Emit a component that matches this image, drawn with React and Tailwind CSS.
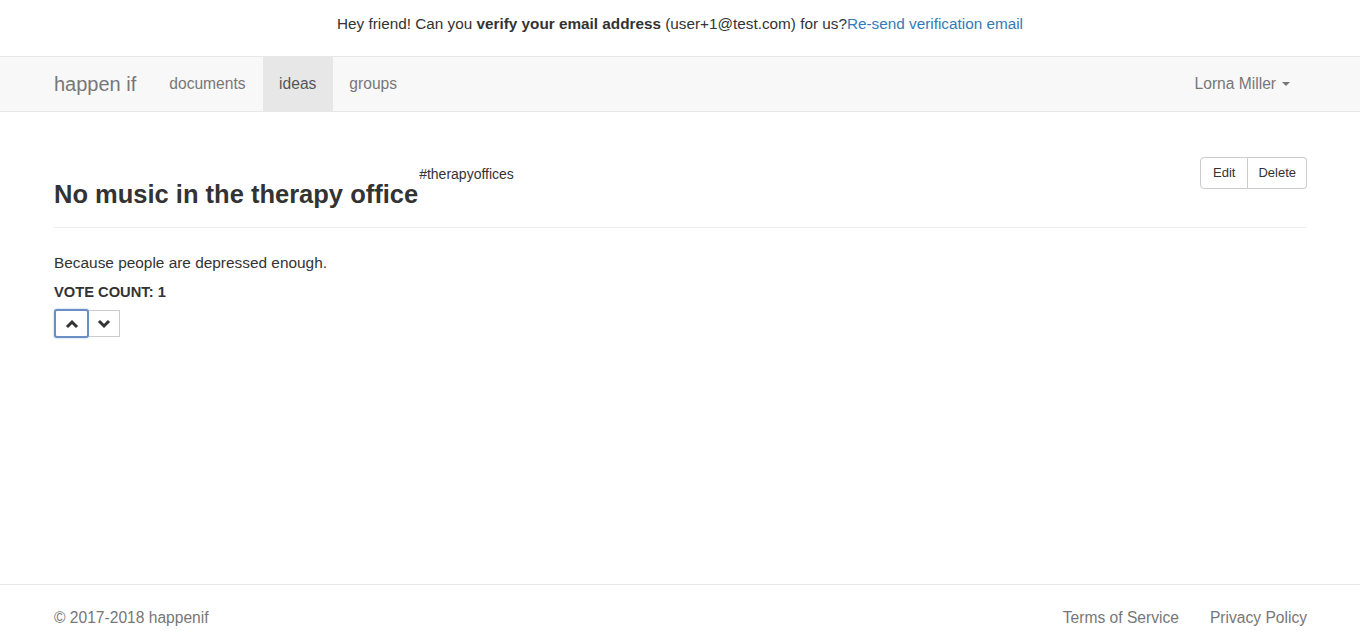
import React from "react";

function ChevronUp() {
  return (
    <svg width="14" height="10" viewBox="0 0 14 10">
      <path d="M2 8 L7 3 L12 8" fill="none" stroke="#333" strokeWidth="3" />
    </svg>
  );
}

function ChevronDown() {
  return (
    <svg width="14" height="10" viewBox="0 0 14 10">
      <path d="M2 2 L7 7 L12 2" fill="none" stroke="#333" strokeWidth="3" />
    </svg>
  );
}

export default function App() {
  return (
    <div className="min-h-[640px] flex flex-col bg-white text-[#333] font-['Liberation_Sans',Arial,sans-serif]">
      {/* verify banner */}
      <div className="h-[56px] pb-[8px] flex items-center justify-center text-[15.3px]">
        <span>
          Hey friend! Can you <b>verify your email address</b> (user+1@test.com) for us?
        </span>
        <a className="text-[#337ab7]">Re-send verification email</a>
      </div>

      {/* navbar */}
      <nav className="h-[56px] bg-[#f8f8f8] border-y border-[#e7e7e7] flex items-stretch justify-between pl-[54px] pr-[53px]">
        <div className="flex items-stretch">
          <a className="flex items-center text-[20px] text-[#777] pr-[15px]">happen if</a>
          <a className="flex items-center pl-[18px] pr-[17px] text-[15.6px] text-[#777]">documents</a>
          <a className="flex items-center px-[16.5px] text-[15.6px] text-[#555] bg-[#e7e7e7]">ideas</a>
          <a className="flex items-center px-[16.5px] text-[15.6px] text-[#777]">groups</a>
        </div>
        <div className="flex items-center text-[15.6px] text-[#777] pr-[17px]">
          Lorna Miller
          <span className="ml-[6px] border-x-[4px] border-t-[4px] border-x-transparent border-t-[#777]" />
        </div>
      </nav>

      {/* idea */}
      <main className="flex-1 pl-[54px] pr-[53px]">
        <div className="flex justify-between pt-[44px]">
          <h1 className="mt-[24px] text-[25.5px] font-bold leading-[1.1]">
            No music in the therapy office
            <sup className="text-[14px] font-normal align-[17px] ml-[1px]">#therapyoffices</sup>
          </h1>
          <div className="flex h-[32px] mt-[1px] text-[13px]">
            <button className="px-[12px] border border-[#ccc] rounded-l-[4px] bg-white">Edit</button>
            <button className="px-[10px] border border-l-0 border-[#ccc] rounded-r-[4px] bg-white">Delete</button>
          </div>
        </div>
        <hr className="mt-[19px] border-[#eee]" />
        <p className="mt-[23px] text-[15.4px]">Because people are depressed enough.</p>
        <p className="mt-[7px] text-[14.7px] font-bold">VOTE COUNT: 1</p>
        <div className="mt-[6px] flex">
          <button className="w-[35px] h-[29px] flex items-center justify-center border-2 border-[#6a8fc4] rounded-[3px] shadow-[0_0_2px_#9ab6e0] bg-white">
            <ChevronUp />
          </button>
          <button className="w-[31px] h-[27px] mt-[1px] flex items-center justify-center border border-[#ccc] border-l-0 bg-white">
            <ChevronDown />
          </button>
        </div>
      </main>

      {/* footer */}
      <footer className="h-[56px] border-t border-[#e7e7e7] flex items-center justify-between pl-[54px] pr-[53px] text-[15.6px] text-[#777]">
        <span className="mt-[10px]">© 2017-2018 happenif</span>
        <div className="flex gap-[31px] mt-[10px]">
          <a>Terms of Service</a>
          <a>Privacy Policy</a>
        </div>
      </footer>
    </div>
  );
}
